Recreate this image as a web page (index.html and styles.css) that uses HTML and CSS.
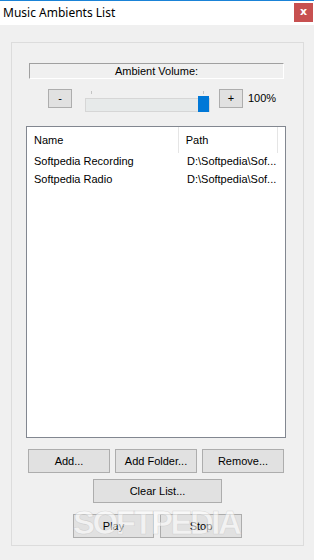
FILE: index.html
```html
<!DOCTYPE html>
<html>
<head>
<meta charset="utf-8">
<link rel="stylesheet" href="styles.css">
</head>
<body>
<div class="window">
  <div class="titlebar">
    <span class="title">Music Ambients List</span>
    <span class="close">x</span>
  </div>
  <div class="client">
    <div class="group">
      <div class="vol-label">Ambient Volume:</div>
      <div class="vol-row">
        <div class="btn small">-</div>
        <div class="slider">
          <div class="ticks"><span class="tick"></span><span class="tick"></span></div>
          <div class="track"></div>
          <div class="thumb"></div>
        </div>
        <div class="btn small plus">+</div>
        <span class="pct">100%</span>
      </div>
      <div class="list">
        <div class="list-head">
          <div class="col c1">Name</div>
          <div class="col c2">Path</div>
          <div class="col c3"></div>
        </div>
        <div class="row"><div class="col c1">Softpedia Recording</div><div class="col c2">D:\Softpedia\Sof...</div></div>
        <div class="row"><div class="col c1">Softpedia Radio</div><div class="col c2">D:\Softpedia\Sof...</div></div>
      </div>
      <div class="btn-row r1">
        <div class="btn w82">Add...</div>
        <div class="btn w82">Add Folder...</div>
        <div class="btn w82">Remove...</div>
      </div>
      <div class="btn-row r2">
        <div class="btn clear">Clear List...</div>
      </div>
      <div class="btn-row r3">
        <div class="btn play">Play</div>
        <div class="btn w82">Stop</div>
        <div class="watermark">SOFTPEDIA</div>
      </div>
    </div>
  </div>
</div>
</body>
</html>
```
FILE: styles.css
```css
* { box-sizing: border-box; }
html, body { margin: 0; padding: 0; }
body {
  width: 314px;
  height: 560px;
  overflow: hidden;
  font-family: "Liberation Sans", Arial, sans-serif;
  font-size: 11px;
  color: #000;
  background: #f0f0f0;
}
.window { width: 314px; height: 560px; display: flex; flex-direction: column; }
.titlebar {
  height: 25px;
  background: #fff;
  border-top: 1px solid #1a83d7;
  display: flex;
  align-items: flex-start;
  justify-content: space-between;
}
.title {
  font-family: "Noto Sans", "Open Sans", sans-serif;
  font-size: 12px;
  line-height: 16px;
  margin-top: 4px;
  margin-left: 3px;
  color: #000;
}
.close {
  width: 19px;
  height: 19px;
  margin-top: 2px;
  margin-right: 1px;
  background: #c75050;
  color: #fff;
  font-family: "DejaVu Sans", sans-serif;
  font-weight: bold;
  font-size: 11px;
  line-height: 17px;
  text-align: center;
}
.client { flex: 1; padding: 17px 0 0 11px; }
.group {
  width: 293px;
  height: 504px;
  border: 1px solid #dcdcdc;
  display: flex;
  flex-direction: column;
  align-items: flex-start;
}
.vol-label {
  margin-top: 20px;
  margin-left: 17px;
  width: 255px;
  height: 16px;
  border-top: 1px solid #a0a0a0;
  border-left: 1px solid #a0a0a0;
  border-bottom: 1px solid #fff;
  border-right: 1px solid #fff;
  text-align: center;
  line-height: 14px;
}
.vol-row {
  margin-top: 10px;
  margin-left: 36px;
  display: flex;
  align-items: flex-start;
}
.btn {
  background: #e1e1e1;
  border: 1px solid #adadad;
  text-align: center;
  line-height: 22px;
  height: 24px;
}
.btn.small { width: 24px; height: 19px; line-height: 17px; }
.slider {
  position: relative;
  margin-top: 2px;
  margin-left: 13px;
  width: 125px;
  height: 21px;
}
.ticks { display: flex; justify-content: space-between; padding: 0 6px 0 6px; height: 3px; }
.tick { width: 1px; height: 3px; background: #c4c4c4; }
.track {
  margin-top: 4px;
  height: 14px;
  background: #e7eaea;
  border: 1px solid #d6d6d6;
}
.thumb {
  position: absolute;
  left: 113px;
  top: 5px;
  width: 11px;
  height: 16px;
  background: #0078d7;
}
.plus { margin-left: 9px; }
.pct { margin-left: 5px; line-height: 19px; }
.list {
  margin-top: 14px;
  margin-left: 14px;
  width: 260px;
  height: 312px;
  background: #fff;
  border: 1px solid #828790;
}
.list-head { display: flex; height: 26px; }
.list-head .col { padding-top: 7px; border-right: 1px solid #e5e5e5; }
.col { padding-left: 7px; white-space: nowrap; overflow: hidden; line-height: 13px; }
.c1 { width: 153px; }
.c2 { width: 100px; }
.c3 { width: 5px; border-right: none !important; }
.row { display: flex; height: 18px; }
.row .col { padding-top: 2px; }
.row .c1 { width: 153px; }
.btn-row { display: flex; gap: 5px; }
.r1 { margin-top: 11px; margin-left: 16px; }
.w82 { width: 82px; }
.r2 { margin-top: 6px; margin-left: 81px; }
.clear { width: 129px; }
.r3 { margin-top: 11px; margin-left: 61px; gap: 6px; position: relative; }
.play { width: 81px; }
.watermark {
  position: absolute;
  left: 0;
  top: -10px;
  font-family: "Liberation Sans", Arial, sans-serif;
  font-weight: bold;
  font-size: 33px;
  line-height: 38px;
  letter-spacing: -2.5px;
  color: rgba(255,255,255,0.6);
  -webkit-text-stroke: 0.6px rgba(180,180,180,0.45);
  pointer-events: none;
}
```
